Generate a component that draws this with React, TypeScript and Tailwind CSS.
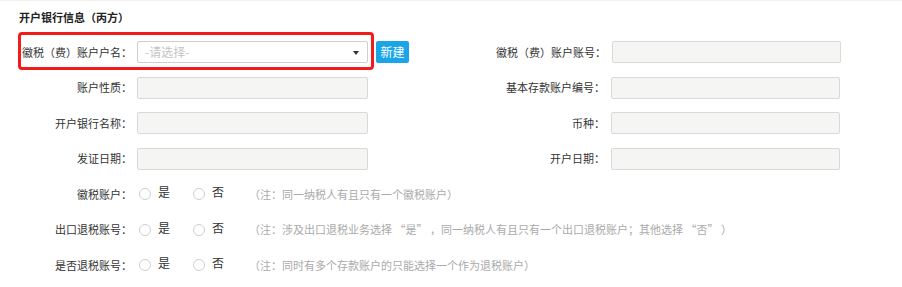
import React from 'react';

const labelCls = 'text-right text-[11px] text-[#333] whitespace-nowrap';
const inputCls = 'h-[22px] bg-[#f5f5f3] border border-[#d9d9d9] rounded-[2px]';

function Field({ label, labelW, inputW }: { label: string; labelW: string; inputW: string }) {
  return (
    <div className="flex items-center">
      <div className={`${labelCls} ${labelW}`}>{label}</div>
      <div className={`${inputCls} ${inputW}`} />
    </div>
  );
}

function Radio({ text }: { text: string }) {
  return (
    <div className="flex items-center">
      <span className="w-[12px] h-[12px] rounded-full border border-[#cfcfcf] bg-white" />
      <span className="ml-[7px] mb-[4px] text-[12px] text-[#333]">{text}</span>
    </div>
  );
}

function RadioRow({ label, note }: { label: string; note: string }) {
  return (
    <div className="flex items-center h-[22px]">
      <div className={`${labelCls} w-[132px]`}>{label}</div>
      <div className="ml-[7px] flex items-center gap-[23px]">
        <Radio text="是" />
        <Radio text="否" />
      </div>
      <div className="ml-[25px] text-[11px] text-[#aaa] whitespace-nowrap">{note}</div>
    </div>
  );
}

export default function App() {
  return (
    <div
      className="relative w-[902px] h-[287px] bg-white border-t border-[#f0f0f0] pt-[8px]"
      style={{ fontFamily: '"Noto Sans CJK SC", "Noto Sans", sans-serif' }}
    >
      <div className="pl-[19px] h-[16px] leading-[16px] text-[11px] font-bold text-[#222]">开户银行信息（丙方）</div>

      <div className="mt-[16px] flex flex-col gap-[13.5px]">
        <div className="flex items-center h-[22px]">
          <div className="flex items-center w-[450px]">
            <div className={`${labelCls} w-[137px] pr-[5px]`}>徽税（费）账户户名：</div>
            <div className="relative h-[22px] w-[231px] bg-white border border-[#cfcfcf] rounded-[2px] flex items-center pl-[7px]">
              <span className="text-[12px] text-[#c4c4c4]">-请选择-</span>
              <span className="absolute right-[8px] top-[9px] w-0 h-0 border-l-[3px] border-r-[3px] border-t-[4px] border-l-transparent border-r-transparent border-t-[#333]" />
            </div>
            <button className="ml-[8px] h-[22px] w-[33px] bg-[#1aa6e6] text-white text-[12px] rounded-[2px] leading-[22px]">新建</button>
          </div>
          <Field label="徽税（费）账户账号：" labelW="w-[162px] pr-[6px]" inputW="w-[229px]" />
        </div>

        <div className="flex items-center h-[22px]">
          <div className="w-[450px]">
            <Field label="账户性质：" labelW="w-[137px] pr-[5px]" inputW="w-[231px]" />
          </div>
          <Field label="基本存款账户编号：" labelW="w-[161px] pr-[6px]" inputW="w-[229px]" />
        </div>

        <div className="flex items-center h-[22px]">
          <div className="w-[450px]">
            <Field label="开户银行名称：" labelW="w-[137px] pr-[5px]" inputW="w-[231px]" />
          </div>
          <Field label="币种：" labelW="w-[161px] pr-[6px]" inputW="w-[229px]" />
        </div>

        <div className="flex items-center h-[22px]">
          <div className="w-[450px]">
            <Field label="发证日期：" labelW="w-[137px] pr-[5px]" inputW="w-[231px]" />
          </div>
          <Field label="开户日期：" labelW="w-[161px] pr-[6px]" inputW="w-[229px]" />
        </div>

        <RadioRow label="徽税账户：" note="（注：同一纳税人有且只有一个徽税账户）" />
        <RadioRow
          label="出口退税账号："
          note="（注：涉及出口退税业务选择 “是” ，同一纳税人有且只有一个出口退税账户；其他选择 “否” ）"
        />
        <RadioRow label="是否退税账号：" note="（注：同时有多个存款账户的只能选择一个作为退税账户）" />
      </div>

      <div className="absolute left-[18px] top-[31px] w-[356px] h-[38px] border-[3px] border-[#f21c1c] rounded-[4px] pointer-events-none" />
    </div>
  );
}
